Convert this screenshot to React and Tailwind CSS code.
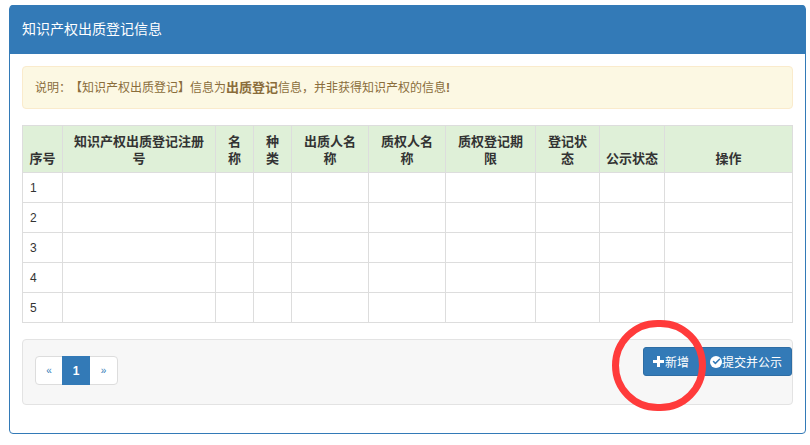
import React from 'react';
import { Check } from 'lucide-react';

const font = { fontFamily: '"Liberation Sans", "Noto Sans CJK SC", sans-serif' };

const columns = [
  { title: '序号', width: 'w-[40px]' },
  { title: '知识产权出质登记注册号', width: 'w-[153px]' },
  { title: '名称', width: 'w-[38px]' },
  { title: '种类', width: 'w-[38px]' },
  { title: '出质人名称', width: 'w-[77px]' },
  { title: '质权人名称', width: 'w-[77px]' },
  { title: '质权登记期限', width: 'w-[90px]' },
  { title: '登记状态', width: 'w-[64px]' },
  { title: '公示状态', width: 'w-[65px]' },
  { title: '操作', width: 'w-[128px]' },
];

const rows = [1, 2, 3, 4, 5];

function App() {
  return (
    <div className="relative w-[810px] h-[445px] overflow-hidden bg-white pt-[5px] pl-[9px] text-[12px] text-[#333]" style={font}>
      <div className="w-[797px] h-[429px] border border-[#337ab7] rounded-[4px] bg-white">
        <div className="h-[49px] -mt-px bg-[#337ab7] rounded-t-[3px] px-[12px] flex items-center text-[14px] text-white">
          知识产权出质登记信息
        </div>
        <div className="px-[12px] pt-[12px]">
          <div className="h-[43px] border border-[#faebcc] bg-[#fcf8e3] rounded-[4px] pl-[12px] flex items-center text-[#8a6d3b]">
            <span>说明：<span className="ml-[5px]">【知识产权出质登记】信息为</span><b className="text-[13px]">出质登记</b>信息，并非获得知识产权的信息<b>!</b></span>
          </div>

          <table className="mt-[16px] w-[771px] table-fixed border-collapse">
            <thead>
              <tr className="h-[47px] bg-[#dff0d8]">
                {columns.map((col) => (
                  <th key={col.title} className={`${col.width} border border-[#ddd] px-[6px] pb-[5px] align-bottom text-center text-[13px] leading-[17px] font-bold`}>
                    {col.title}
                  </th>
                ))}
              </tr>
            </thead>
            <tbody>
              {rows.map((n) => (
                <tr key={n} className="h-[30px]">
                  {columns.map((col, i) => (
                    <td key={col.title} className="border border-[#ddd] px-[7px] text-[12px]">
                      {i === 0 ? n : ''}
                    </td>
                  ))}
                </tr>
              ))}
            </tbody>
          </table>

          <div className="mt-[16px] h-[66px] border border-[#e3e3e3] bg-[#f7f7f7] rounded-[4px] pl-[12px] flex justify-between">
            <div className="mt-[16px] h-[29px] flex border border-[#ddd] rounded-[4px] bg-white text-[12px]">
              <span className="w-[26px] flex items-center justify-center text-[10px] text-[#337ab7]">«</span>
              <span className="w-[28px] -my-px flex items-center justify-center bg-[#337ab7] text-white font-bold">1</span>
              <span className="w-[27px] flex items-center justify-center text-[10px] text-[#337ab7]">»</span>
            </div>
            <div className="mt-[7px] h-[29px] w-[149px] flex items-center bg-[#337ab7] border border-[#2e6da4] rounded-[3px] text-white text-[12px]">
              <span className="pl-[9px] flex items-center w-[57px]">
                <svg width="11" height="11" viewBox="0 0 11 11" className="mr-[1px]" fill="#fff">
                  <path d="M4 0h3v4h4v3H7v4H4V7H0V4h4z" />
                </svg>
                <span className="pt-[2px]">新增</span>
              </span>
              <span className="pl-[9px] flex items-center">
                <span className="w-[12px] h-[12px] rounded-full bg-white flex items-center justify-center">
                  <Check size={9} strokeWidth={4} className="text-[#337ab7]" />
                </span>
                <span className="pt-[2px]">提交并公示</span>
              </span>
            </div>
          </div>
        </div>
      </div>

      <div className="absolute left-[612px] top-[320px] w-[94px] h-[91px] rounded-full border-[7px] border-[#ff3b3b]" />
    </div>
  );
}

export default App;
